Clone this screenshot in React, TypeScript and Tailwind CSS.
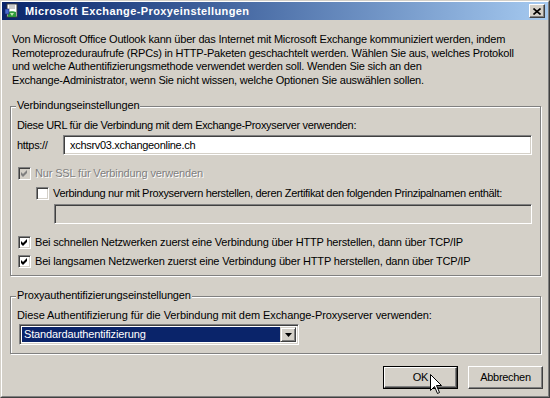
import React from 'react';

const font = { fontFamily: '"Liberation Sans", Arial, sans-serif' };

function Check({ checked, disabled }: { checked?: boolean; disabled?: boolean }) {
  return (
    <div
      className={`w-[13px] h-[13px] shrink-0 border border-t-[#808080] border-l-[#808080] border-r-white border-b-white shadow-[inset_1px_1px_0_#404040,inset_-1px_-1px_0_#d4d0c8] ${
        disabled ? 'bg-[#d4d0c8]' : 'bg-white'
      }`}
    >
      {checked && (
        <svg width="11" height="11" viewBox="0 0 11 11" className="block">
          <polygon points="2,4 4,6 8,2 8,5 4,9 2,7" fill={disabled ? '#808080' : '#000'} />
        </svg>
      )}
    </div>
  );
}

function Group({ label, h, children }: { label: string; h: string; children: React.ReactNode }) {
  return (
    <div
      className={`relative ml-[8px] w-[531px] ${h} border border-[#808080] shadow-[inset_1px_1px_0_#fff,1px_1px_0_#fff]`}
    >
      <span className="absolute -top-[8px] left-[5px] bg-[#d4d0c8] px-[1px] leading-[13px] tracking-[-0.15px]">{label}</span>
      {children}
    </div>
  );
}

function Button({ label, def }: { label: string; def?: boolean }) {
  return (
    <div className={`w-[75px] h-[23px] ${def ? 'border border-black' : ''}`}>
      <div
        className={`w-full h-full flex items-center justify-center border border-t-white border-l-white border-r-[#404040] border-b-[#404040] shadow-[inset_-1px_-1px_0_#808080] tracking-[-0.3px]`}
      >
        {label}
      </div>
    </div>
  );
}

export default function App() {
  return (
    <div
      style={font}
      className="relative w-[550px] h-[398px] bg-[#d4d0c8] text-black text-[11px] border border-t-[#d4d0c8] border-l-[#d4d0c8] border-r-[#404040] border-b-[#404040]"
    >
      <div className="w-full h-full border border-t-white border-l-white border-r-[#808080] border-b-[#808080] flex flex-col">
        {/* title bar */}
        <div className="h-[18px] flex items-center bg-gradient-to-r from-[#0a246a] to-[#a6caf0] pl-[2px] pr-[3px]">
          <svg width="16" height="16" viewBox="0 0 16 16" className="shrink-0">
            <rect x="3" y="1" width="10" height="13" fill="#fff" stroke="#3c3c3c" />
            <path d="M5 3h6M5 5h6" stroke="#9a9a9a" />
            <path d="M4 9c2-1 6-1 8 0v5H4z" fill="#2e9a3a" />
            <path d="M6 10l2 3 2-3z" fill="#bfe7b0" />
            <rect x="1" y="6" width="4" height="5" fill="#4a6cd0" stroke="#1a2a70" strokeWidth="0.6" />
          </svg>
          <span className="ml-[5px] text-white font-bold text-[11px] leading-[18px] tracking-[0.4px]">
            Microsoft Exchange-Proxyeinstellungen
          </span>
          <div className="ml-auto w-[16px] h-[14px] bg-[#d4d0c8] border border-t-white border-l-white border-r-[#404040] border-b-[#404040] shadow-[inset_-1px_-1px_0_#808080] flex items-center justify-center">
            <svg width="8" height="7" viewBox="0 0 8 7" className="block">
              <path d="M0.5 0.5l7 6M7.5 0.5l-7 6" stroke="#000" strokeWidth="1.6" />
            </svg>
          </div>
        </div>

        {/* intro */}
        <div className="mt-[13px] ml-[10px] leading-[13.5px] whitespace-nowrap tracking-[-0.2px]">
          Von Microsoft Office Outlook kann über das Internet mit Microsoft Exchange kommuniziert werden, indem
          <br />
          Remoteprozeduraufrufe (RPCs) in HTTP-Paketen geschachtelt werden. Wählen Sie aus, welches Protokoll
          <br />
          und welche Authentifizierungsmethode verwendet werden soll. Wenden Sie sich an den
          <br />
          Exchange-Administrator, wenn Sie nicht wissen, welche Optionen Sie auswählen sollen.
        </div>

        {/* connection group */}
        <div className="mt-[19px]">
          <Group label="Verbindungseinstellungen" h="h-[170px]">
            <div className="flex flex-col">
              <div className="mt-[12px] ml-[6px] leading-[13px] tracking-[-0.33px]">
                Diese URL für die Verbindung mit dem Exchange-Proxyserver verwenden:
              </div>
              <div className="mt-[3px] flex items-center">
                <span className="ml-[6px] w-[46px] tracking-[-0.3px]">https://</span>
                <div className="w-[469px] h-[20px] bg-white border border-t-[#808080] border-l-[#808080] border-r-white border-b-white shadow-[inset_1px_1px_0_#404040,inset_-1px_-1px_0_#d4d0c8] pl-[6px] flex items-center tracking-[-0.3px]">
                  xchsrv03.xchangeonline.ch
                </div>
              </div>
              <div className="mt-[12px] ml-[7px] flex items-center h-[13px]">
                <Check checked disabled />
                <span className="ml-[4px] text-[#808080] [text-shadow:1px_1px_0_#fff] tracking-[-0.15px]">
                  Nur SSL für Verbindung verwenden
                </span>
              </div>
              <div className="mt-[7px] ml-[25px] flex items-center h-[13px]">
                <Check />
                <span className="ml-[4px] tracking-[-0.33px] whitespace-nowrap">
                  Verbindung nur mit Proxyservern herstellen, deren Zertifikat den folgenden Prinzipalnamen enthält:
                </span>
              </div>
              <div className="mt-[4px] ml-[43px] w-[478px] h-[20px] bg-[#d4d0c8] border border-t-[#808080] border-l-[#808080] border-r-white border-b-white shadow-[inset_1px_1px_0_#404040,inset_-1px_-1px_0_#d4d0c8]" />
              <div className="mt-[12px] ml-[7px] flex items-center h-[13px]">
                <Check checked />
                <span className="ml-[4px] tracking-[-0.18px]">
                  Bei schnellen Netzwerken zuerst eine Verbindung über HTTP herstellen, dann über TCP/IP
                </span>
              </div>
              <div className="mt-[6px] ml-[7px] flex items-center h-[13px]">
                <Check checked />
                <span className="ml-[4px] tracking-[-0.18px]">
                  Bei langsamen Netzwerken zuerst eine Verbindung über HTTP herstellen, dann über TCP/IP
                </span>
              </div>
            </div>
          </Group>
        </div>

        {/* auth group */}
        <div className="mt-[20px]">
          <Group label="Proxyauthentifizierungseinstellungen" h="h-[58px]">
            <div className="flex flex-col">
              <div className="mt-[12px] ml-[6px] leading-[13px] tracking-[-0.08px]">
                Diese Authentifizierung für die Verbindung mit dem Exchange-Proxyserver verwenden:
              </div>
              <div className="mt-[2px] ml-[8px] w-[280px] h-[21px] bg-white border border-t-[#808080] border-l-[#808080] border-r-white border-b-white shadow-[inset_1px_1px_0_#404040,inset_-1px_-1px_0_#d4d0c8] flex items-center p-[2px]">
                <div className="flex-1 h-full bg-[#0a246a] text-white flex items-center pl-[2px] tracking-[-0.15px]">
                  Standardauthentifizierung
                </div>
                <div className="w-[16px] h-full bg-[#d4d0c8] border border-t-[#d4d0c8] border-l-[#d4d0c8] border-r-[#404040] border-b-[#404040] shadow-[inset_1px_1px_0_#fff,inset_-1px_-1px_0_#808080] flex items-center justify-center">
                  <svg width="7" height="4" viewBox="0 0 7 4" className="block">
                    <polygon points="0,0 7,0 3.5,4" fill="#000" />
                  </svg>
                </div>
              </div>
            </div>
          </Group>
        </div>

        {/* buttons */}
        <div className="mt-[12px] flex justify-end gap-[10px] pr-[5px]">
          <Button label="OK" def />
          <Button label="Abbrechen" />
        </div>
      </div>

      {/* mouse pointer */}
      <svg width="13" height="21" viewBox="0 0 13 21" className="absolute left-[429px] top-[373px]">
        <path d="M0.5 0.5V16.5L4.5 12.5L7.5 19.5L9.5 18.5L6.5 11.5H11.5Z" fill="#fff" stroke="#000" strokeLinejoin="miter" />
      </svg>
    </div>
  );
}
